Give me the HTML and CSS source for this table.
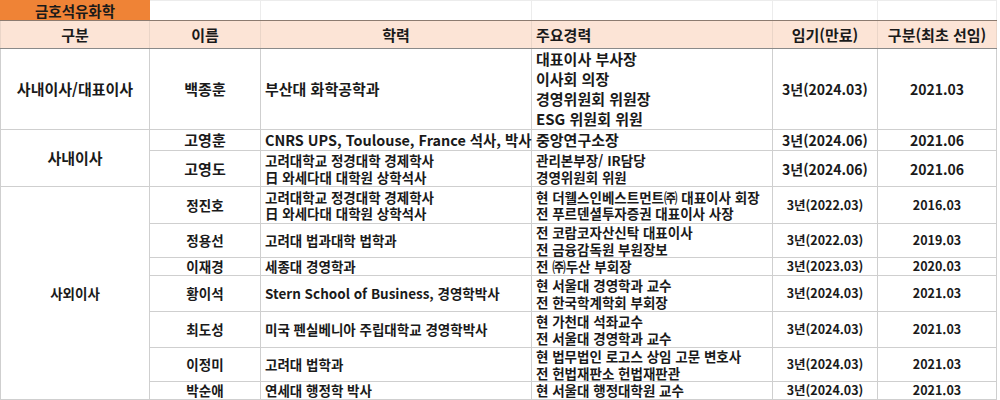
FILE: index.html
```html
<!DOCTYPE html>
<html lang="ko">
<head>
<meta charset="utf-8">
<link rel="stylesheet" href="styles.css">
</head>
<body>
<table class="sheet">
  <colgroup>
    <col class="c1"><col class="c2"><col class="c3"><col class="c4"><col class="c5"><col class="c6">
  </colgroup>
  <tr class="r-title">
    <td class="brand">금호석유화학</td><td></td><td></td><td></td><td></td><td></td>
  </tr>
  <tr class="r-head">
    <th>구분</th><th>이름</th><th>학력</th><th class="left">주요경력</th><th>임기(만료)</th><th>구분(최초 선임)</th>
  </tr>
  <tr class="big h81">
    <td>사내이사/대표이사</td>
    <td>백종훈</td>
    <td class="left">부산대 화학공학과</td>
    <td class="left lh4">대표이사 부사장<br>이사회 의장<br>경영위원회 위원장<br>ESG 위원회 위원</td>
    <td class="num">3년(2024.03)</td>
    <td class="num">2021.03</td>
  </tr>
  <tr class="big h21">
    <td rowspan="2">사내이사</td>
    <td>고영훈</td>
    <td class="left latin">CNRS UPS, Toulouse, France 석사, 박사</td>
    <td class="left">중앙연구소장</td>
    <td class="num">3년(2024.06)</td>
    <td class="num">2021.06</td>
  </tr>
  <tr class="big h36">
    <td>고영도</td>
    <td class="left small">고려대학교 정경대학 경제학사<br>日 와세다대 대학원 상학석사</td>
    <td class="left small">관리본부장/ IR담당<br>경영위원회 위원</td>
    <td class="num">3년(2024.06)</td>
    <td class="num">2021.06</td>
  </tr>
  <tr class="sm h37">
    <td rowspan="7" class="label">사외이사</td>
    <td>정진호</td>
    <td class="left">고려대학교 정경대학 경제학사<br>日 와세다대 대학원 상학석사</td>
    <td class="left">현 더웰스인베스트먼트㈜ 대표이사 회장<br>전 푸르덴셜투자증권 대표이사 사장</td>
    <td class="num">3년(2022.03)</td>
    <td class="num">2016.03</td>
  </tr>
  <tr class="sm h34">
    <td>정용선</td>
    <td class="left">고려대 법과대학 법학과</td>
    <td class="left">전 코람코자산신탁 대표이사<br>전 금융감독원 부원장보</td>
    <td class="num">3년(2022.03)</td>
    <td class="num">2019.03</td>
  </tr>
  <tr class="sm h18">
    <td>이재경</td>
    <td class="left">세종대 경영학과</td>
    <td class="left">전 ㈜두산 부회장</td>
    <td class="num">3년(2023.03)</td>
    <td class="num">2020.03</td>
  </tr>
  <tr class="sm h36">
    <td>황이석</td>
    <td class="left">Stern School of Business, 경영학박사</td>
    <td class="left">현 서울대 경영학과 교수<br>전 한국학계학회 부회장</td>
    <td class="num">3년(2024.03)</td>
    <td class="num">2021.03</td>
  </tr>
  <tr class="sm h36">
    <td>최도성</td>
    <td class="left">미국 펜실베니아 주립대학교 경영학박사</td>
    <td class="left">현 가천대 석좌교수<br>전 서울대 경영학과 교수</td>
    <td class="num">3년(2024.03)</td>
    <td class="num">2021.03</td>
  </tr>
  <tr class="sm h34">
    <td>이정미</td>
    <td class="left">고려대 법학과</td>
    <td class="left">현 법무법인 로고스 상임 고문 변호사<br>전 헌법재판소 헌법재판관</td>
    <td class="num">3년(2024.03)</td>
    <td class="num">2021.03</td>
  </tr>
  <tr class="sm h17">
    <td>박순애</td>
    <td class="left">연세대 행정학 박사</td>
    <td class="left">현 서울대 행정대학원 교수</td>
    <td class="num">3년(2024.03)</td>
    <td class="num">2021.03</td>
  </tr>
</table>
</body>
</html>
```

FILE: styles.css
```css
html, body {
  margin: 0;
  padding: 0;
  background: #ffffff;
}

.sheet {
  border-collapse: collapse;
  table-layout: fixed;
  width: 996px;
  font-family: "Noto Sans CJK KR", sans-serif;
  color: #1a1a1a;
  font-weight: 700;
  font-size: 13px;
}

.c1 { width: 149px; }
.c2 { width: 111px; }
.c3 { width: 271px; }
.c4 { width: 241px; }
.c5 { width: 105px; }
.c6 { width: 119px; }

.sheet td, .sheet th {
  border: 1px solid #cfcfcf;
  padding: 0 4px;
  text-align: center;
  vertical-align: middle;
  white-space: nowrap;
  overflow: visible;
  line-height: 16px;
}

.sheet .left {
  text-align: left;
}

.r-title td {
  height: 19px;
  padding: 0;
  border-color: #ececec;
  border-bottom: 1px solid #8c7b70;
  line-height: 17px;
}

.r-title .brand {
  background: #ef8336;
  color: #1a1a1a;
  font-size: 14.5px;
  border-color: #ef8336;
  border-bottom-color: #8c7b70;
}

.r-head th {
  height: 27px;
  background: #fce4d6;
  font-size: 15px;
  font-weight: 700;
  border-color: #ead5c8;
  border-bottom: 1px solid #8a8a8a;
  line-height: 20px;
}

.big td {
  font-size: 15px;
}

.big td.num {
  font-size: 14px;
}

.big td.latin {
  font-size: 14.4px;
}

.big td.small {
  font-size: 13.5px;
  line-height: 17px;
}

.sm td {
  font-size: 13.5px;
  line-height: 16.5px;
}

.sm td.num {
  font-size: 12.5px;
}

.sm td.label {
  font-size: 13.5px;
}

.sheet td.lh4 {
  line-height: 20px;
}

.h81 td { height: 80px; }
.h21 td { height: 20px; }
.h36 td { height: 35px; }
.h37 td { height: 36px; }
.h34 td { height: 33px; }
.h18 td { height: 17px; }
.h17 td { height: 16px; }
```
